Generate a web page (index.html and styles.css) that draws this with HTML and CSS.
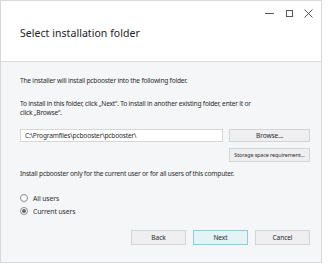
FILE: index.html
```html
<!DOCTYPE html>
<html lang="en">
<head>
  <meta charset="UTF-8" />
  <title>Select installation folder</title>
  <link rel="stylesheet" href="styles.css">
</head>
<body>
  <div class="window">
    <header class="header">
      <div class="window-controls">
        <span class="ctl ctl-min"></span>
        <span class="ctl ctl-max"></span>
        <svg class="ctl ctl-close" width="9" height="9" viewBox="0 0 9 9">
          <path d="M0.5 0.5 L8.5 8.5 M8.5 0.5 L0.5 8.5" stroke="#555" stroke-width="1" fill="none" />
        </svg>
      </div>
      <h1 class="title">Select installation folder</h1>
    </header>

    <main class="content">
      <p class="text intro">The installer will install pcbooster into the following folder.</p>
      <p class="text hint">To install in this folder, click „Next“. To install in another existing folder, enter it or click „Browse“.</p>

      <div class="path-row">
        <input class="path" type="text" value="C:\Programfiles\pcbooster\pcbooster\" />
        <button class="btn">Browse...</button>
      </div>
      <div class="space-row">
        <button class="btn btn-small">Storage space requirement...</button>
      </div>

      <p class="text scope">Install pcbooster only for the current user or for all users of this computer.</p>

      <label class="radio"><span class="dot"></span>All users</label>
      <label class="radio"><span class="dot checked"></span>Current users</label>

      <div class="actions">
        <button class="btn btn-nav">Back</button>
        <button class="btn btn-nav btn-primary">Next</button>
        <button class="btn btn-nav">Cancel</button>
      </div>
    </main>
  </div>
</body>
</html>
```

FILE: styles.css
```css
body {
  margin: 0;
  background-color: #ffffff;
  font-family: 'Noto Sans', sans-serif;
  color: #2b2b2b;
}

.window {
  width: 322px;
  height: 263px;
  box-sizing: border-box;
  border: 1px solid #d9d9d9;
  display: flex;
  flex-direction: column;
  background-color: #f5f6f8;
}

/* === Header === */
.header {
  height: 60px;
  flex-shrink: 0;
  background-color: #fff;
  border-bottom: 1px solid #dcdcdc;
}

.window-controls {
  display: flex;
  justify-content: flex-end;
  align-items: center;
  padding: 7px 8px 0 0;
  height: 10px;
}

.ctl {
  display: block;
}

.ctl-min {
  width: 9px;
  height: 1px;
  background-color: #555;
  margin-right: 12px;
}

.ctl-max {
  width: 5px;
  height: 5px;
  border: 1px solid #555;
  margin-right: 11px;
}

.title {
  margin: 8px 0 0 19px;
  font-size: 10.5px;
  font-weight: 400;
  color: #222;
  letter-spacing: 0.05px;
}

/* === Content === */
.content {
  flex: 1;
  padding: 0 11px 0 19px;
  display: flex;
  flex-direction: column;
}

.text {
  margin: 0;
  font-size: 6.6px;
  line-height: 9px;
  letter-spacing: -0.2px;
}

.intro {
  margin-top: 14px;
}

.hint {
  margin-top: 14px;
  width: 240px;
}

.path-row {
  display: flex;
  gap: 6px;
  margin-top: 12px;
}

.path {
  width: 204px;
  height: 13px;
  box-sizing: border-box;
  margin: 0;
  padding: 0 4px;
  border: 1px solid #d6d6d6;
  background-color: #fff;
  font-family: 'Noto Sans', sans-serif;
  font-size: 6.6px;
  letter-spacing: -0.18px;
  color: #2b2b2b;
  outline: none;
}

.btn {
  margin: 0;
  padding: 0;
  height: 13px;
  width: 81px;
  box-sizing: border-box;
  border: 1px solid #d4d4d6;
  background-color: #efeff1;
  font-family: 'Noto Sans', sans-serif;
  font-size: 6.6px;
  letter-spacing: -0.1px;
  color: #2b2b2b;
}

.space-row {
  display: flex;
  justify-content: flex-end;
  margin-top: 6px;
}

.btn-small {
  height: 14px;
  font-size: 5.4px;
}

.scope {
  margin-top: 7px;
}

.radio {
  display: flex;
  align-items: center;
  gap: 5px;
  height: 10px;
  font-size: 6.8px;
  letter-spacing: -0.1px;
}

.radio:first-of-type {
  margin-top: 15px;
}

.radio + .radio {
  margin-top: 3px;
}

.dot {
  width: 8px;
  height: 8px;
  box-sizing: border-box;
  border: 1px solid #8a8a8a;
  border-radius: 50%;
  background-color: #fff;
  position: relative;
}

.dot.checked::after {
  content: "";
  position: absolute;
  left: 1px;
  top: 1px;
  width: 4px;
  height: 4px;
  border-radius: 50%;
  background-color: #666;
}

.actions {
  display: flex;
  justify-content: flex-end;
  gap: 7px;
  margin-top: 14px;
}

.btn-nav {
  width: 55px;
  height: 15px;
}

.btn-primary {
  background-color: #e3f3f6;
  border-color: #8ecdd8;
}
```
